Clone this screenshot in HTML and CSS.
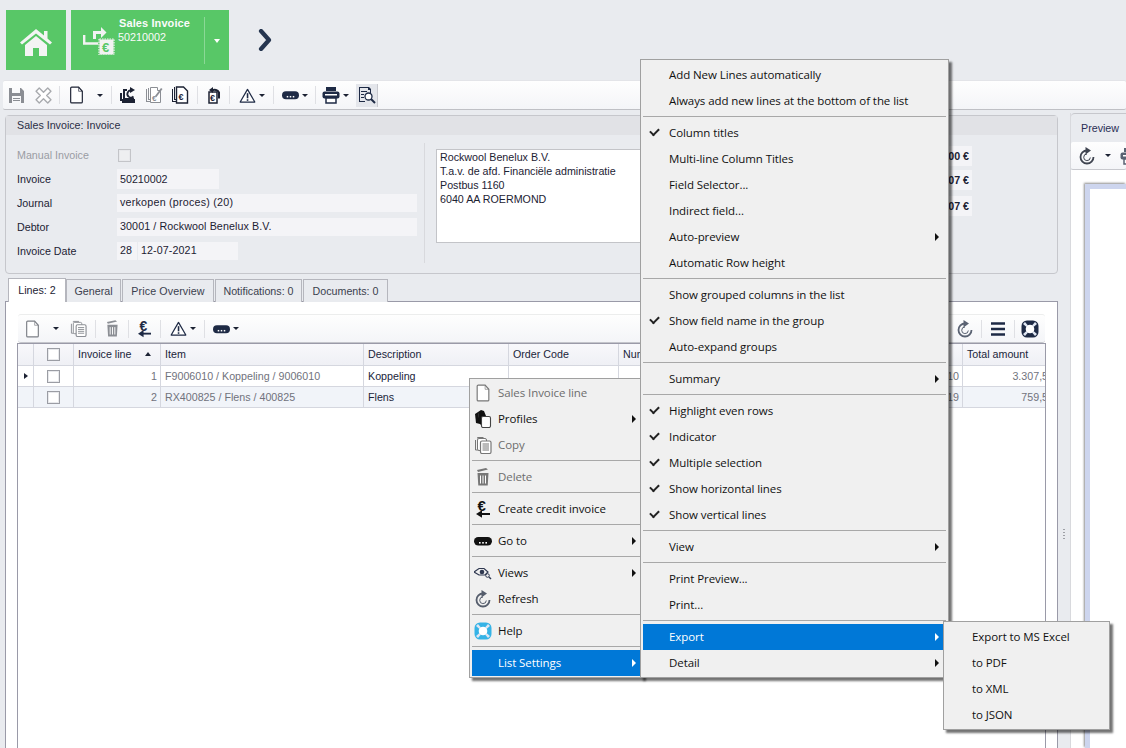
FILE: index.html
```html
<!DOCTYPE html>
<html lang="en">
<head>
<meta charset="utf-8">
<title>Sales Invoice</title>
<link rel="stylesheet" href="styles.css">
</head>
<body>
<svg class="defs" aria-hidden="true">
  <symbol id="i-doc" viewBox="0 0 14 17"><path d="M1.500 2q0-1 1-1h6.500l3.500 4v10q0 1-1 1h-9q-1 0-1-1z" fill="#fff" stroke="currentColor" stroke-width="1.100"/><path d="M9 1.500v3.500h3.500" fill="none" stroke="currentColor" stroke-width=".6"/></symbol>
  <symbol id="i-save" viewBox="0 0 15 16"><path fill-rule="evenodd" d="M0 1h12l3 3v12H0zM3 1v5h8V1zM3 9v7h9V9z" fill="currentColor"/><rect x="4" y="11" width="7" height="1" fill="currentColor"/><rect x="4" y="13" width="7" height="1" fill="currentColor"/></symbol>
  <symbol id="i-cross" viewBox="0 0 16 16"><path d="M4 1l4 4 4-4 3 3-4 4 4 4-3 3-4-4-4 4-3-3 4-4-4-4z" fill="#fff" stroke="currentColor" stroke-width="1.300" stroke-linejoin="round"/></symbol>
  <symbol id="i-refreshdoc" viewBox="0 0 18 18"><path d="M4 3h4v2H6v7h9v2H4z" fill="currentColor"/><path d="M1 7h2v6h13v4H3v-2H1z" fill="currentColor"/><path d="M14.500 10.500a3.600 3.600 0 1 1-1.500-6" fill="none" stroke="currentColor" stroke-width="1.800"/><path d="M11 1l5 3-5 3z" fill="currentColor"/></symbol>
  <symbol id="i-editdoc" viewBox="0 0 18 18"><path d="M1 3h1v12h9v1H1zM3 2h1v11h9v1H3z" fill="currentColor"/><path d="M5.500 1.500h7v3h3v12h-10z" fill="#fff" stroke="currentColor"/><path d="M10 10l6-8 1.500 1-6 8z" fill="currentColor"/><text x="7" y="15" class="svg-euro-s">€</text></symbol>
  <symbol id="i-docs" viewBox="0 0 18 18"><path d="M1 3h1v12h9v1H1zM3 1h1v12h9v1H3z" fill="currentColor"/><path d="M5.500 1h7l4 4v12h-11z" fill="#fff" stroke="currentColor" stroke-width="1.400"/><text x="7.500" y="14" class="svg-euro">€</text></symbol>
  <symbol id="i-bookdoc" viewBox="0 0 18 18"><path d="M4 6h8v11H4z" fill="#fff" stroke="currentColor" stroke-width="1.500"/><text x="5" y="15" class="svg-euro">€</text><path d="M7 4.500a5 5 0 0 1 7 2v6" fill="none" stroke="currentColor" stroke-width="2"/><path d="M8 1v6L4 4z" fill="currentColor"/></symbol>
  <symbol id="i-warn" viewBox="0 0 18 16"><path d="M9 1.500l7.800 13.500H1.200z" fill="#fff" stroke="currentColor" stroke-width="1.300" stroke-linejoin="round"/><rect x="8.200" y="5.500" width="1.700" height="5.500" fill="currentColor"/><rect x="8.200" y="12" width="1.700" height="1.700" fill="currentColor"/></symbol>
  <symbol id="i-dots" viewBox="0 0 18 10"><rect x="0" y="1" width="18" height="8.500" rx="4.200" fill="currentColor"/><rect x="5" y="6" width="1.600" height="1.600" fill="#fff"/><rect x="8.200" y="6" width="1.600" height="1.600" fill="#fff"/><rect x="11.400" y="6" width="1.600" height="1.600" fill="#fff"/></symbol>
  <symbol id="i-print" viewBox="0 0 18 18"><path d="M4 1h10v4H4z" fill="currentColor"/><rect x="0.500" y="5.500" width="17" height="7" rx="2" fill="currentColor"/><rect x="3" y="8" width="12" height="1.500" fill="#fff"/><path d="M4 12h10v5H4z" fill="#fff" stroke="currentColor" stroke-width="1.500"/></symbol>
  <symbol id="i-preview" viewBox="0 0 18 18"><path d="M1 1h10l2 2v5h-1V4h-2V2H2v13h5v1H1z" fill="currentColor"/><path d="M3 5h6v1H3zM3 8h3v1H3zM3 11h3v1H3z" fill="currentColor"/><circle cx="10.500" cy="10.500" r="3.500" fill="#fff" stroke="currentColor" stroke-width="1.300"/><path d="M13 13l4 4" stroke="currentColor" stroke-width="2"/></symbol>
  <symbol id="i-copy" viewBox="0 0 18 18"><path d="M1.500 4v10h3M3.500 2.500v-1h6" fill="none" stroke="currentColor"/><rect x="3.500" y="2.500" width="9" height="12" rx="1.500" fill="#fff" stroke="currentColor" stroke-width="1"/><rect x="6.500" y="5" width="10.500" height="12.500" rx="1.500" fill="#fff" stroke="currentColor" stroke-width="1.200"/><path d="M8.500 8h6.500M8.500 10h6.500M8.500 12h6.500M8.500 14h6.500" stroke="currentColor"/></symbol>
  <symbol id="i-trash" viewBox="0 0 14 18"><path d="M1 2l9-2 2 1.500-10 2.500z" fill="currentColor"/><path d="M1.500 5h11l-.8 12.500h-9.400z" fill="currentColor"/><path d="M4.500 7.500v8M7 7.500v8M9.500 7.500v8" stroke="#fff" stroke-width="1"/></symbol>
  <symbol id="i-euroback" viewBox="0 0 14 18"><text x="1.500" y="11" class="svg-euro-b">€</text><path d="M5 13h9v2H5z" fill="currentColor"/><path d="M0 14l6-3.800v7.600z" fill="currentColor"/></symbol>
  <symbol id="i-refresh" viewBox="0 0 18 18"><path d="M9 3.500A6.500 6.500 0 1 0 15.500 10" fill="none" stroke="currentColor" stroke-width="1.800"/><path d="M9 7A3.300 3.300 0 1 0 12.300 10.500" fill="none" stroke="currentColor" stroke-width="1"/><path d="M7.500 0l5.500 3.500L7.500 7.500z" fill="currentColor"/></symbol>
  <symbol id="i-burger" viewBox="0 0 16 14"><path d="M1 1.500h14M1 7h14M1 12.500h14" stroke="currentColor" stroke-width="2.400"/></symbol>
  <symbol id="i-buoy" viewBox="0 0 18 18"><rect x="0.500" y="0.500" width="17" height="17" rx="5.500" fill="currentColor"/><path d="M2 4l2-2 3 3.500-1.500 1.500zM14 2l2 2-3.500 3L11 5.500zM2 14l2 2 3-3.500L5.500 11zM16 14l-2 2-3-3.500 1.500-1.500z" fill="#dfe6f2"/><circle cx="9" cy="9" r="4.300" fill="#fff"/></symbol>
  <symbol id="i-eye" viewBox="0 0 18 14"><path d="M0 6l5-3.500h5l4 3.500-3 3H5z" fill="none" stroke="currentColor" stroke-width="1.200"/><circle cx="8" cy="6" r="2.300" fill="currentColor"/><circle cx="13.500" cy="9.500" r="1.800" fill="none" stroke="currentColor"/><path d="M15 11l2 2" stroke="currentColor" stroke-width="1.500"/></symbol>
  <symbol id="i-profiles" viewBox="0 0 18 18"><path d="M1 4l3-2 2 12-4-1z" fill="currentColor"/><path d="M4 2l3-2 3 1 2 5-5 9-2-2z" fill="currentColor"/><rect x="7.500" y="6.500" width="9" height="11" rx="1.500" fill="#fff" stroke="#444" stroke-width="1.100"/></symbol>
</svg>

<header class="topbar">
  <a class="tile tile-home">
    <svg class="home-icon" viewBox="0 0 32 28"><path d="M16 1L24 7.500V3h3.500v7.500L32 14.500l-2 2L16 5.500 2 16.500l-2-2z" fill="#f4f4f4"/><path d="M5 17L16 8l11 9v11h-8v-8h-6v8H5z" fill="#f4f4f4"/></svg>
  </a>
  <div class="tile tile-doc">
    <svg class="doc-icon" viewBox="0 0 32 28"><path d="M1.200 8v8.500h14" fill="none" stroke="#f2f2f2" stroke-width="2.400"/><path d="M11.500 12V5.500h7" fill="none" stroke="#f2f2f2" stroke-width="3"/><path d="M18 0l5.500 5.500L18 11z" fill="#f2f2f2"/><rect x="16.500" y="12.500" width="14" height="15" fill="#f2f2f2"/><path d="M16 12v16h15V12z" fill="none" stroke="#f2f2f2" stroke-width="1.200" stroke-dasharray="1.500 1"/><text x="19" y="25" class="tile-euro">€</text></svg>
    <div class="tile-text"><b>Sales Invoice</b><span>50210002</span></div>
    <div class="tile-split"><i class="caret caret-white"></i></div>
  </div>
  <svg class="chevron" viewBox="0 0 14 22"><path d="M3 2l8 9-8 9" fill="none" stroke="#263650" stroke-width="4.200" stroke-linejoin="round" stroke-linecap="round"/></svg>
</header>

<nav class="toolbar toolbar-main">
  <span class="tb w27 muted"><svg class="i-save"><use href="#i-save"/></svg></span>
  <span class="tb w27 muted2"><svg class="i-cross"><use href="#i-cross"/></svg></span>
  <i class="sep sep-b"></i>
  <span class="tb w32"><svg class="i-doc"><use href="#i-doc"/></svg></span>
  <span class="tb w15"><i class="caret"></i></span>
  <i class="sep sep-a"></i>
  <span class="tb w26"><svg class="ic18"><use href="#i-refreshdoc"/></svg></span>
  <span class="tb w26 muted"><svg class="ic18"><use href="#i-editdoc"/></svg></span>
  <span class="tb w26"><svg class="ic18"><use href="#i-docs"/></svg></span>
  <i class="sep sep-c"></i>
  <span class="tb w31"><svg class="ic18"><use href="#i-bookdoc"/></svg></span>
  <i class="sep"></i>
  <span class="tb w43 navy"><svg class="ic18w"><use href="#i-warn"/></svg><i class="caret caret-tight"></i></span>
  <i class="sep"></i>
  <span class="tb w41 navy"><svg class="ic18d"><use href="#i-dots"/></svg><i class="caret caret-tight"></i></span>
  <i class="sep"></i>
  <span class="tb w38 navy"><svg class="ic18"><use href="#i-print"/></svg><i class="caret caret-tight"></i></span>
  <span class="tb tb-active navy"><svg class="ic18"><use href="#i-preview"/></svg></span>
</nav>

<main class="workspace">
  <section class="left">
    <section class="panel">
      <h2 class="panel-title">Sales Invoice: Invoice</h2>
      <div class="panel-body">
        <div class="form">
          <label class="lbl lbl-off">Manual Invoice</label><span class="check-cell"><i class="check check-off"></i></span>
          <label class="lbl">Invoice</label><span class="field f-short">50210002</span>
          <label class="lbl">Journal</label><span class="field f-journal">verkopen (proces) (20)</span>
          <label class="lbl">Debtor</label><span class="field f-debtor">30001 / Rockwool Benelux B.V.</span>
          <label class="lbl">Invoice Date</label><span class="date"><span class="field f-day">28</span><span class="field f-date">12-07-2021</span></span>
        </div>
        <address class="addr">Rockwool Benelux B.V.<br>T.a.v. de afd. Financiële administratie<br>Postbus 1160<br>6040 AA ROERMOND</address>
        <div class="totals">
          <span class="total">3.067,00 €</span>
          <span class="total">1.000,07 €</span>
          <span class="total total-last">4.067,07 €</span>
        </div>
      </div>
    </section>

    <div class="tabs">
      <span class="tab tab-active">Lines: 2</span>
      <span class="tab t-gen">General</span>
      <span class="tab t-price">Price Overview</span>
      <span class="tab t-not">Notifications: 0</span>
      <span class="tab t-doc">Documents: 0</span>
    </div>

    <div class="tabpage">
      <div class="toolbar toolbar-list">
        <span class="tb w26 muted3"><svg class="i-doc"><use href="#i-doc"/></svg></span>
        <span class="tb w22"><i class="caret"></i></span>
        <span class="tb w22 muted"><svg class="ic16"><use href="#i-copy"/></svg></span>
        <i class="sep sep-d"></i>
        <span class="tb w32 muted"><svg class="i-trash"><use href="#i-trash"/></svg></span>
        <i class="sep"></i>
        <span class="tb w31 navy"><svg class="i-euro"><use href="#i-euroback"/></svg></span>
        <i class="sep"></i>
        <span class="tb w43 navy"><svg class="ic18w"><use href="#i-warn"/></svg><i class="caret caret-tight"></i></span>
        <i class="sep"></i>
        <span class="tb w41 navy"><svg class="ic18d"><use href="#i-dots"/></svg><i class="caret caret-tight"></i></span>
        <span class="spacer"></span>
        <span class="tb w32 steel"><svg class="ic18"><use href="#i-refresh"/></svg></span>
        <i class="sep"></i>
        <span class="tb w32 navy"><svg class="ic14b"><use href="#i-burger"/></svg></span>
        <i class="sep"></i>
        <span class="tb w30 navy"><svg class="ic18"><use href="#i-buoy"/></svg></span>
      </div>

      <div class="grid">
        <div class="row row-head">
          <span class="cell"></span>
          <span class="cell cell-c"><i class="check"></i></span>
          <span class="cell cell-sort">Invoice line<i class="caret caret-up"></i></span>
          <span class="cell">Item</span>
          <span class="cell">Description</span>
          <span class="cell">Order Code</span>
          <span class="cell">Number</span>
          <span class="cell">Total amount</span>
        </div>
        <div class="row">
          <span class="cell cell-c"><i class="row-mark"></i></span>
          <span class="cell cell-c"><i class="check"></i></span>
          <span class="cell num dim">1</span>
          <span class="cell dim">F9006010 / Koppeling / 9006010</span>
          <span class="cell">Koppeling</span>
          <span class="cell"></span>
          <span class="cell num dim">10</span>
          <span class="cell num dim">3.307,50</span>
        </div>
        <div class="row row-even">
          <span class="cell"></span>
          <span class="cell cell-c"><i class="check"></i></span>
          <span class="cell num dim">2</span>
          <span class="cell dim">RX400825 / Flens / 400825</span>
          <span class="cell">Flens</span>
          <span class="cell"></span>
          <span class="cell num dim">19</span>
          <span class="cell num dim">759,50</span>
        </div>
      </div>
    </div>
  </section>

  <div class="splitter"></div>

  <aside class="preview">
    <div class="preview-tab">Preview</div>
    <div class="toolbar toolbar-preview">
      <span class="tb w26 steel2"><svg class="ic18"><use href="#i-refresh"/></svg></span>
      <span class="tb w16"><i class="caret"></i></span>
      <span class="tb w26 steel"><svg class="ic18"><use href="#i-print"/></svg></span>
    </div>
    <div class="preview-body"><div class="page"></div></div>
  </aside>
</main>

<ul class="menu menu-context">
  <li class="off"><svg class="mi"><use href="#i-doc"/></svg>Sales Invoice line</li>
  <li class="sub"><svg class="mi black"><use href="#i-profiles"/></svg>Profiles</li>
  <li class="off"><svg class="mi"><use href="#i-copy"/></svg>Copy</li>
  <li class="line"></li>
  <li class="off"><svg class="mi"><use href="#i-trash"/></svg>Delete</li>
  <li class="line"></li>
  <li><svg class="mi black"><use href="#i-euroback"/></svg>Create credit invoice</li>
  <li class="line"></li>
  <li class="sub"><svg class="mi black"><use href="#i-dots"/></svg>Go to</li>
  <li class="line"></li>
  <li class="sub"><svg class="mi navy"><use href="#i-eye"/></svg>Views</li>
  <li><svg class="mi steel"><use href="#i-refresh"/></svg>Refresh</li>
  <li class="line"></li>
  <li><svg class="mi blue"><use href="#i-buoy"/></svg>Help</li>
  <li class="line"></li>
  <li class="sub hot">List Settings</li>
</ul>

<ul class="menu menu-main">
  <li>Add New Lines automatically</li>
  <li>Always add new lines at the bottom of the list</li>
  <li class="line"></li>
  <li class="on">Column titles</li>
  <li>Multi-line Column Titles</li>
  <li>Field Selector...</li>
  <li>Indirect field...</li>
  <li class="sub">Auto-preview</li>
  <li>Automatic Row height</li>
  <li class="line"></li>
  <li>Show grouped columns in the list</li>
  <li class="on">Show field name in the group</li>
  <li>Auto-expand groups</li>
  <li class="line"></li>
  <li class="sub">Summary</li>
  <li class="line"></li>
  <li class="on">Highlight even rows</li>
  <li class="on">Indicator</li>
  <li class="on">Multiple selection</li>
  <li class="on">Show horizontal lines</li>
  <li class="on">Show vertical lines</li>
  <li class="line"></li>
  <li class="sub">View</li>
  <li class="line"></li>
  <li>Print Preview...</li>
  <li>Print...</li>
  <li class="line"></li>
  <li class="sub hot">Export</li>
  <li class="sub">Detail</li>
</ul>

<ul class="menu menu-sub">
  <li>Export to MS Excel</li>
  <li>to PDF</li>
  <li>to XML</li>
  <li>to JSON</li>
</ul>
</body>
</html>
```

FILE: styles.css
```css
* { box-sizing: border-box; }
html, body { margin: 0; height: 100%; }
body {
  width: 1126px; height: 748px; overflow: hidden; position: relative;
  background: #e9ebef; color: #1c2233;
  font: 10.7px "Liberation Sans", Arial, sans-serif;
}
.defs { position: absolute; width: 0; height: 0; }
.svg-euro { font: bold 9px "Liberation Sans", sans-serif; fill: currentColor; }
.svg-euro-s { font: bold 8px "Liberation Sans", sans-serif; fill: currentColor; }
.svg-euro-b { font: bold 15px "Liberation Sans", sans-serif; fill: currentColor; }
.tile-euro { font: bold 13px "Liberation Sans", sans-serif; fill: #58c767; }

.topbar { height: 81px; display: flex; align-items: flex-start; padding: 10px 0 0 6px; gap: 5px; }
.tile { height: 60px; background: #58c767; color: #fff; display: flex; }
.tile-home { width: 60px; align-items: center; justify-content: center; }
.home-icon { width: 32px; height: 28px; margin-top: 3px; }
.tile-doc { width: 158px; position: relative; }
.doc-icon { width: 32px; height: 28px; margin: 17px 0 0 12px; }
.tile-text { width: 89px; padding: 7px 0 0 3px; display: flex; flex-direction: column; gap: 1px; font-size: 10.8px; color: #fbfbfb; line-height: 13px; }
.tile-text b { margin-left: 1px; font-size: 11px; letter-spacing: .1px; }
.tile-split { flex: 1; margin: 7px 0 6px; border-left: 1px solid #8bd896; display: flex; align-items: center; justify-content: center; }
.chevron { width: 14px; height: 22px; margin: 19px 0 0 24px; }

.caret { display: inline-block; width: 0; height: 0; border: 3px solid transparent; border-top: 3px solid #1c2233; border-bottom: 0; }
.caret-white { border-top-color: #fff; border-width: 4px 3.5px 0; }
.caret-tight { margin-left: 3px; }
.caret-up { border-top: 0; border-bottom: 4px solid #1c2233; margin-left: auto; margin-right: 5px; }

.toolbar { display: flex; align-items: center; background: linear-gradient(#fefefe, #f4f5f8); border-radius: 2px; }
.toolbar-main { height: 29px; margin-left: 3px; border-bottom: 1px solid #bfc0c5; box-shadow: 0 -1px 0 #e3e4e8; }
.tb { display: flex; align-items: center; justify-content: center; height: 100%; flex: none; }
.w15 { width: 15px; } .w16 { width: 16px; } .w22 { width: 22px; } .w26 { width: 26px; } .w27 { width: 27px; } .w30 { width: 30px; }
.w31 { width: 31px; } .w32 { width: 32px; } .w38 { width: 38px; } .w41 { width: 41px; } .w43 { width: 43px; }
.sep { width: 1px; height: 18px; background: #dfe0e4; flex: none; }
.sep-a { margin: 0 3px 0 4px; }
.sep-b { margin-left: 2px; }
.sep-c { margin-left: 4px; }
.sep-d { margin-left: 6px; }
.spacer { flex: 1; }
.tb-active { width: 22px; height: 23px; margin-left: 2px; background: #e4e6eb; border-right: 1px solid #c8c9cf; }
.muted { color: #8b8e94; } .muted2 { color: #a8aaae; } .muted3 { color: #7d8087; }
.navy { color: #1e2a45; } .steel { color: #5a6272; } .steel2 { color: #3f4450; }
.black { color: #111; } .blue { color: #35b3e6; }
.i-save { width: 15px; height: 16px; }
.i-cross { width: 17px; height: 17px; }
.i-doc { width: 15px; height: 18px; }
.i-trash { width: 13px; height: 17px; }
.i-euro { width: 13px; height: 18px; }
.ic16 { width: 17px; height: 17px; }
.ic18 { width: 18px; height: 18px; }
.ic18w { width: 17px; height: 15px; }
.ic18d { width: 17px; height: 10px; }
.ic14b { width: 16px; height: 14px; }

.workspace { display: flex; height: 638px; }
.left { width: 1053px; margin-left: 5px; flex: none; display: flex; flex-direction: column; }
.panel { margin-top: 5px; height: 159px; border: 1px solid #c6c7cc; border-radius: 4px; display: flex; flex-direction: column; }
.panel-title { margin: 0; height: 19px; background: #e1e2e6; font: inherit; line-height: 19px; padding-left: 11px; color: #2a2e45; }
.panel-body { display: flex; flex: 1; align-items: flex-start; position: relative; }
.form { width: 419px; height: 120px; margin-top: 8px; padding-left: 11px; display: grid; grid-template-columns: 100px 300px; grid-auto-rows: 24px; align-items: center; border-right: 1px solid #d8d9dd; }
.lbl-off { color: #9a9ca3; }
.check-cell { display: flex; padding-left: 1px; }
.field { display: block; height: 18px; line-height: 17px; background: #f4f4f7; padding-left: 3px; }
.f-short { width: 102px; height: 20px; line-height: 20px; }
.f-journal { letter-spacing: .23px; }
.f-debtor { letter-spacing: .1px; }
.date { display: flex; gap: 1px; }
.f-day { width: 20px; }
.f-date { width: 100px; padding-left: 3px; letter-spacing: .1px; }
.check { display: block; width: 13px; height: 13px; background: #fff; border: 1px solid #9b9da4; box-shadow: inset 0 0 0 1px #e8e9ec; }
.check-off { background: #eeeff1; border-color: #c3c4c8; }
.addr { width: 260px; height: 94px; margin: 14px 0 0 11px; background: #fff; border: 1px solid #c3c4c8; padding: 0 3px; font-style: normal; line-height: 14px; }
.totals { position: absolute; right: 85px; top: 11px; display: flex; flex-direction: column; gap: 4px; width: 90px; }
.total { height: 20px; line-height: 20px; background: #f4f4f7; font-weight: bold; text-align: right; padding-right: 3px; }
.total-last { margin-top: 2px; }

.tabs { display: flex; height: 24px; margin-top: 4px; padding-left: 3px; position: relative; z-index: 1; align-items: flex-end; }
.tab { height: 23px; line-height: 23px; text-align: center; border: 1px solid #b5b6bd; border-bottom: 0; background: #e9ebef; color: #3b3f4e; margin-right: 1px; }
.tab-active { width: 58px; height: 24px; background: #fff; color: #1c2233; margin-right: 0; border-bottom: 0; }
.t-gen { width: 55px; } .t-price { width: 92px; letter-spacing: .1px; } .t-not { width: 87px; } .t-doc { width: 85px; }

.tabpage { flex: 1; margin-top: -1px; background: #fff; border: 1px solid #9a9aa8; border-bottom: 0; padding: 12px 11px 0; display: flex; flex-direction: column; min-height: 0; }
.toolbar-list { height: 29px; flex: none; border-bottom: 1px solid #c4c5cb; border-radius: 3px; border-top: 1px solid #eceded; padding-left: 1px; margin-left: 1px; margin-right: 1px; }
.grid { flex: 1; overflow: hidden; border: 1px solid #9a9aa8; border-bottom: 0; }
.row { display: grid; grid-template-columns: 16px 40px 87px 203px 145px 110px 344px 95px; width: 1104px; height: 21px; border-bottom: 1px solid #d5d7df; line-height: 20px; color: #20253a; }
.row-head { height: 22px; background: linear-gradient(#f8f8fb, #eff0f5); }
.row-head .cell { padding-bottom: 1px; }
.row-even { background: #f1f4f9; }
.cell { display: flex; align-items: center; padding: 0 4px; border-right: 1px solid #d5d7df; white-space: nowrap; overflow: hidden; min-width: 0; }
.cell-c { justify-content: center; padding: 0; }
.cell-sort { padding-left: 4px; }
.num { justify-content: flex-end; padding-right: 3px; }
.dim { color: #70727c; }
.row-mark { width: 0; height: 0; border-left: 4px solid #1c2233; border-top: 3.500px solid transparent; border-bottom: 3.500px solid transparent; }

.splitter { width: 12px; flex: none; position: relative; }
.splitter::after { content: ""; position: absolute; left: 5px; top: 419px; width: 2px; height: 12px; background: repeating-linear-gradient(#9ea0a6 0 1px, transparent 1px 3px); }
.preview { flex: 1; margin-top: 3px; display: flex; flex-direction: column; min-width: 0; border-left: 1px solid #d8d9dd; }
.preview-tab { height: 29px; line-height: 29px; padding-left: 10px; background: #e9ebef; border-top: 1px solid #c6c7cc; border-top-left-radius: 4px; color: #2a2e55; }
.toolbar-preview { height: 28px; flex: none; padding-left: 3px; border-bottom: 1px solid #c8c9ce; overflow: hidden; }
.preview-body { flex: 1; background: #fff; padding: 14px 0 0 14px; }
.page { height: 100%; background: #fff; border: solid #cdd5ee; border-width: 5px 0 0 5px; box-shadow: -1px -1px 2px #8f8f8f; }

.menu { position: absolute; margin: 0; list-style: none; padding: 2px 2px 1px; background: #f0f0f0; border: 1px solid #a0a0a0; box-shadow: 3px 3px 2px rgba(0,0,0,.55); font: 11.5px/26px "Open Sans", sans-serif; letter-spacing: -.08px; color: #111; }
.menu li { height: 26px; position: relative; padding-left: 26px; white-space: nowrap; }
.menu li.line { height: 6px; padding: 0; }
.menu li.line::after { content: ""; position: absolute; left: 0; right: 0; top: 2px; height: 1px; background: #a8a8a8; }
.menu .off { color: #6d6d6d; }
.menu .hot { background: #0078d7; color: #fff; }
.menu .sub::after { content: ""; position: absolute; right: 4px; top: 9px; border-left: 4px solid #111; border-top: 4px solid transparent; border-bottom: 4px solid transparent; }
.menu-main .sub::after { right: 7px; }
.menu .hot::after { border-left-color: #fff; }
.menu .on::before { content: ""; position: absolute; left: 7px; top: 8px; width: 7px; height: 4px; border: solid #222; border-width: 0 0 2px 2px; transform: rotate(-45deg); }
.mi { position: absolute; left: 2px; top: 4px; width: 18px; height: 18px; color: #777; }
.mi.black { color: #111; } .mi.navy { color: #2f3850; } .mi.steel { color: #555d6c; } .mi.blue { color: #35b3e6; }
.menu-context { left: 469px; top: 378px; padding-top: 1px; width: 174px; z-index: 2; }
.menu-main { left: 640px; top: 59px; width: 309px; z-index: 3; }
.menu-sub { left: 943px; top: 621px; width: 167px; z-index: 4; }
```
